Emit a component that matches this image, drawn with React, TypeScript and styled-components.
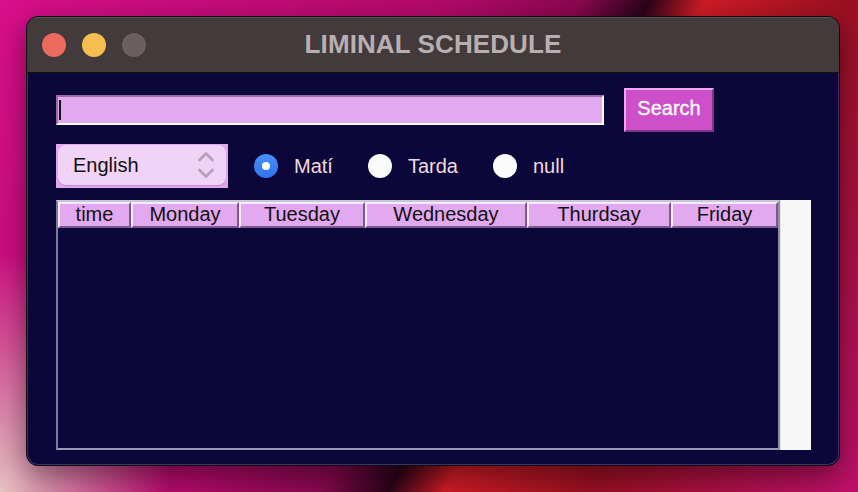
import React from "react";
import styled, { createGlobalStyle } from "styled-components";

const GlobalStyle = createGlobalStyle`
    html, body {
        margin: 0;
        padding: 0;
        width: 858px;
        height: 492px;
        overflow: hidden;
    }
    body {
        font-family: "Liberation Sans", Arial, sans-serif;
        background:
            radial-gradient(ellipse 170px 240px at 0% 100%, #e6c2c2 0%, rgba(230, 194, 194, 0) 100%),
            linear-gradient(118deg, #d90f8b 0%, #b40a6a 40%, #8a0850 52%, #2a0418 58%, #d01c26 63%, #9a1022 76%, #c0106c 100%);
    }
`;

const Desktop = styled.div`
    padding: 16px 0 0 26px;
`;

const Window = styled.div`
    width: 814px;
    height: 450px;
    box-sizing: border-box;
    border: 1px solid #0d0a0c;
    border-radius: 12px;
    overflow: hidden;
    display: flex;
    flex-direction: column;
    background: #0c073a;
    box-shadow: 0 10px 30px rgba(0, 0, 0, 0.45), inset 0 0 0 1px rgba(150, 140, 190, 0.35);
`;

const TitleBar = styled.div`
    height: 55px;
    flex-shrink: 0;
    display: grid;
    grid-template-columns: 1fr auto 1fr;
    align-items: center;
    background: #433a3b;
    border-bottom: 1px solid #151012;
    box-shadow: inset 0 1px 0 rgba(255, 255, 255, 0.12);
`;

const Lights = styled.div`
    display: flex;
    gap: 16px;
    padding-left: 15px;
`;

const Light = styled.span<{ $color: string }>`
    width: 24px;
    height: 24px;
    border-radius: 50%;
    background: ${(p) => p.$color};
`;

const Title = styled.div`
    font-size: 26px;
    font-weight: bold;
    color: #b8afb1;
    letter-spacing: 0.1px;
    padding-bottom: 1px;
`;

const Content = styled.div`
    flex: 1;
    display: flex;
    flex-direction: column;
    gap: 12px;
    padding: 15px 0 15px 29px;
`;

const Row = styled.div`
    display: flex;
    align-items: center;
    height: 44px;
`;

const SearchInput = styled.div`
    width: 548px;
    height: 30px;
    box-sizing: border-box;
    background: #e3a9f0;
    border-style: solid;
    border-width: 2px;
    border-color: #9b6ba3 #ffffff #ffffff #9b6ba3;
    display: flex;
    align-items: center;
    padding-left: 1px;
    margin-top: -1px;
`;

const Caret = styled.span`
    width: 2px;
    height: 20px;
    background: #111;
`;

const SearchButton = styled.button`
    margin-left: 20px;
    width: 90px;
    height: 44px;
    box-sizing: border-box;
    background: #cd4fc9;
    border-style: solid;
    border-width: 2px;
    border-color: #f3a6f1 #7e3684 #7e3684 #f3a6f1;
    color: #ffffff;
    font-family: "Liberation Sans", Arial, sans-serif;
    font-size: 20px;
    padding: 0 0 4px;
    text-align: center;
    -webkit-text-stroke: 0.3px #ffffff;
`;

const SelectBox = styled.div`
    width: 172px;
    height: 44px;
    box-sizing: border-box;
    background: #e0a8ee;
    padding: 1px 2px 3px;
`;

const SelectInner = styled.div`
    height: 100%;
    border-radius: 8px;
    background: #f1d3f7;
    box-shadow: 0 1px 1px rgba(140, 80, 150, 0.35);
    display: flex;
    align-items: center;
    justify-content: space-between;
    padding: 0 11px 0 15px;
    font-size: 20px;
    color: #111;
`;

const Options = styled.div`
    display: flex;
    align-items: center;
    gap: 35px;
    margin-left: 26px;
`;

const Option = styled.label`
    display: flex;
    align-items: center;
    gap: 16px;
    font-size: 20px;
    color: #f3d9df;
`;

const RadioDot = styled.span<{ $checked?: boolean }>`
    width: 24px;
    height: 24px;
    border-radius: 50%;
    box-sizing: border-box;
    display: flex;
    align-items: center;
    justify-content: center;
    background: ${(p) => (p.$checked ? "linear-gradient(#4a8ff8, #2f74ee)" : "#fbfbfb")};
    box-shadow: 0 0 1px rgba(0, 0, 0, 0.4);

    &::after {
        content: "";
        width: 8px;
        height: 8px;
        border-radius: 50%;
        background: #ffffff;
        display: ${(p) => (p.$checked ? "block" : "none")};
    }
`;

const TableWrap = styled.div`
    display: flex;
    height: 250px;
`;

const Table = styled.div`
    width: 724px;
    box-sizing: border-box;
    border-style: solid;
    border-width: 2px;
    border-color: #c9c5da #8f8ba8 #9c98b4 #7d7a9a;
`;

const HeaderRow = styled.div`
    display: grid;
    grid-template-columns: 73px 108px 126px 162px 144px 107px;
`;

const HeaderCell = styled.div`
    height: 26px;
    box-sizing: border-box;
    background: #e3a9f0;
    border-style: solid;
    border-width: 2px;
    border-color: #f5ebf8 #7a5a8c #7a5a8c #f5ebf8;
    font-size: 20px;
    line-height: 21px;
    color: #111;
    text-align: center;
`;

const Scrollbar = styled.div`
    width: 30px;
    background: #f7f7f7;
    border-left: 1px solid #e6e6e6;
`;

const Chevrons = () => (
    <svg width="18" height="32" viewBox="0 0 18 32" fill="none">
        <path d="M2.5 11 L9 4.5 L15.5 11" stroke="#b79fba" strokeWidth="2.8" strokeLinecap="round" strokeLinejoin="round" />
        <path d="M2.5 21 L9 27.5 L15.5 21" stroke="#b79fba" strokeWidth="2.8" strokeLinecap="round" strokeLinejoin="round" />
    </svg>
);

const days = ["time", "Monday", "Tuesday", "Wednesday", "Thurdsay", "Friday"];

const App: React.FunctionComponent = () => {
    return (
        <Desktop>
            <GlobalStyle />
            <Window>
                <TitleBar>
                    <Lights>
                        <Light $color="#ed6a5e" />
                        <Light $color="#f5bf4f" />
                        <Light $color="#6a5f61" />
                    </Lights>
                    <Title>LIMINAL SCHEDULE</Title>
                    <div />
                </TitleBar>
                <Content>
                    <Row>
                        <SearchInput>
                            <Caret />
                        </SearchInput>
                        <SearchButton>Search</SearchButton>
                    </Row>
                    <Row>
                        <SelectBox>
                            <SelectInner>
                                <span>English</span>
                                <Chevrons />
                            </SelectInner>
                        </SelectBox>
                        <Options>
                            <Option>
                                <RadioDot $checked />
                                Matí
                            </Option>
                            <Option>
                                <RadioDot />
                                Tarda
                            </Option>
                            <Option>
                                <RadioDot />
                                null
                            </Option>
                        </Options>
                    </Row>
                    <TableWrap>
                        <Table>
                            <HeaderRow>
                                {days.map((d) => (
                                    <HeaderCell key={d}>{d}</HeaderCell>
                                ))}
                            </HeaderRow>
                        </Table>
                        <Scrollbar />
                    </TableWrap>
                </Content>
            </Window>
        </Desktop>
    );
};

export default App;
